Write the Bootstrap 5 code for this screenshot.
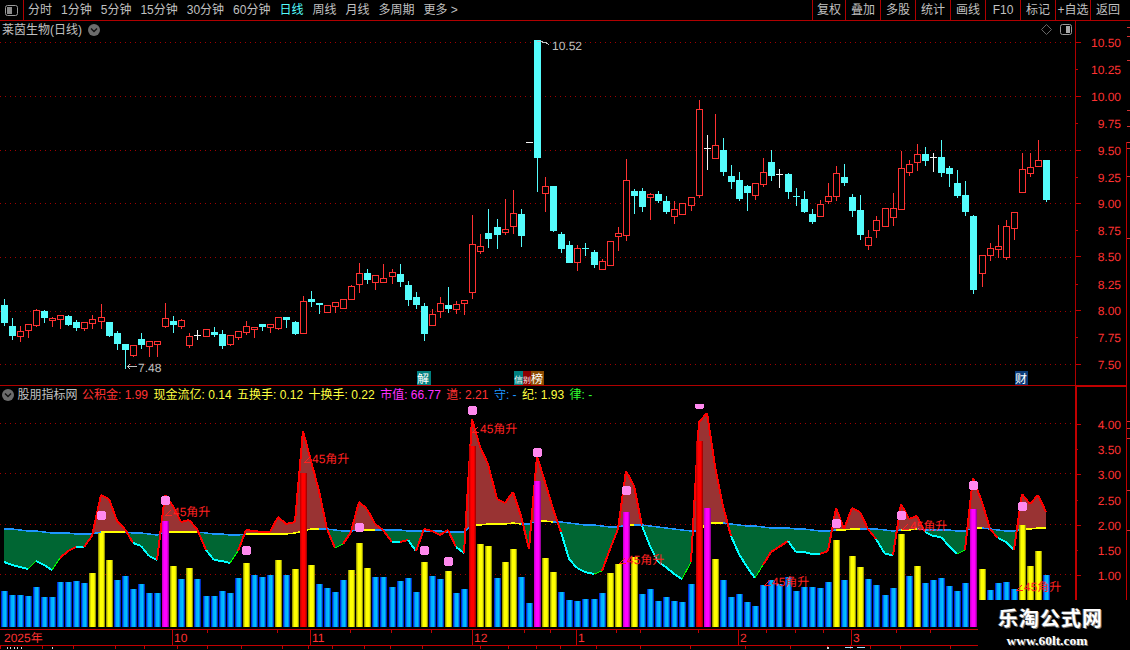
<!DOCTYPE html>
<html lang="zh-CN">
<head>
<meta charset="utf-8">
<title>莱茵生物(日线)</title>
<link rel="stylesheet" href="https://cdn.jsdelivr.net/npm/bootstrap@5.3.0/dist/css/bootstrap.min.css">
<style>
html,body{margin:0;height:650px;overflow:hidden;background:#000;}
body,.tdx-root,svg text{font-family:"Liberation Sans","Noto Sans CJK SC",sans-serif;font-size:12px;color:#c0c0c0;}
.tdx-root{position:relative;width:1130px;height:650px;background:#000;overflow:hidden;}
.tdx-toolbar{height:21px;border-bottom:1px solid #b00000;}
.tb-toggle{width:24px;height:20px;border-right:1px solid #b00000;}
.tb-periods{gap:9px;padding-left:4px;line-height:20px;}
.tb-active{color:#54fcfc;}
.tb-cells{padding-right:5px;}
.tb-cell{width:35px;height:20px;line-height:20px;text-align:center;border-left:1px solid #b00000;white-space:nowrap;}
.tb-cell-first{width:33px;}
.tdx-left{width:1075px;}
.tdx-axis{width:55px;}
.tdx-title{height:17px;padding-left:2px;gap:6px;white-space:nowrap;}
.tdx-subtitle{height:19px;border-top:1px solid #b00000;gap:5.5px;padding-left:2px;white-space:nowrap;}
.tdx-subname{margin-right:-1px;margin-left:-2px;}
.tdx-tools{margin-left:auto;gap:8px;padding-right:3px;}
.c-red{color:#ff3232;}.c-yellow{color:#ffff40;}.c-mag{color:#ff30ff;}.c-blue{color:#1e96ff;}.c-green{color:#30ff30;}
svg{display:block;}
.pane-svg{shape-rendering:crispEdges;}
.pane-svg text{text-rendering:geometricPrecision;}
.watermark{position:absolute;right:0;bottom:0;width:152px;height:50px;background:#000;color:#fff;text-align:center;font-family:"Liberation Serif","Noto Sans CJK SC",serif;font-weight:700;}
.wm-name{font-size:20px;letter-spacing:1px;line-height:26px;padding-top:6px;text-shadow:1px 1px 0 #777,-1px 0 0 #555;color:#fff;padding-right:7px;}
.wm-url{font-size:13.5px;line-height:15px;padding-right:14px;padding-top:1px;text-shadow:1px 1px 0 #666;}
</style>
</head>
<body>
<div class="tdx-root">
  <nav class="tdx-toolbar d-flex align-items-start">
    <div class="tb-toggle d-flex align-items-center justify-content-center">
      <svg width="13" height="11" viewBox="0 0 13 11"><rect x="0.5" y="0.5" width="12" height="10" rx="2" fill="none" stroke="#9a9a9a"/><rect x="2" y="2" width="5" height="7" fill="#8a8a8a"/></svg>
    </div>
    <div class="tb-periods d-flex">
      <span>分时</span><span>1分钟</span><span>5分钟</span><span>15分钟</span><span>30分钟</span><span>60分钟</span><span class="tb-active">日线</span><span class="ps-0">周线</span><span>月线</span><span>多周期</span><span>更多 &gt;</span>
    </div>
    <div class="tb-cells d-flex ms-auto">
      <span class="tb-cell tb-cell-first">复权</span><span class="tb-cell">叠加</span><span class="tb-cell">多股</span><span class="tb-cell">统计</span><span class="tb-cell">画线</span><span class="tb-cell">F10</span><span class="tb-cell">标记</span><span class="tb-cell">+自选</span><span class="tb-cell">返回</span>
    </div>
  </nav>
  <div class="d-flex">
    <div class="tdx-left">
      <div class="tdx-title d-flex align-items-center">
        <span>莱茵生物(日线)</span>
        <svg width="12" height="12" viewBox="0 0 12 12"><circle cx="6" cy="6" r="6" fill="#6c6c6c"/><path d="M3 4.6 6 7.6 9 4.6" fill="none" stroke="#111" stroke-width="1.4"/></svg>
        <div class="tdx-tools d-flex align-items-center">
          <svg width="11" height="11" viewBox="0 0 11 11"><path d="M5.5.5 10.5 5.5 5.5 10.5.5 5.5Z" fill="none" stroke="#666"/></svg>
          <svg width="12" height="11" viewBox="0 0 12 11"><rect x="0.5" y="0.5" width="11" height="10" rx="2" fill="none" stroke="#9a9a9a"/><rect x="6" y="2" width="4" height="7" fill="#a8a8a8"/></svg>
        </div>
      </div>
      <svg id="mainPane" class="pane-svg" width="1075" height="347" viewBox="0 38 1075 347"></svg>
      <div class="tdx-subtitle d-flex align-items-center">
        <svg width="12" height="12" viewBox="0 0 12 12"><circle cx="6" cy="6" r="6" fill="#6c6c6c"/><path d="M3 4.6 6 7.6 9 4.6" fill="none" stroke="#111" stroke-width="1.4"/></svg>
        <span class="tdx-subname">股朋指标网</span>
        <span class="c-red">公积金: 1.99</span>
        <span class="c-yellow">现金流亿: 0.14</span>
        <span class="c-yellow">五换手: 0.12</span>
        <span class="c-yellow">十换手: 0.22</span>
        <span class="c-mag">市值: 66.77</span>
        <span class="c-red">遒: 2.21</span>
        <span class="c-blue">守: -</span>
        <span class="c-yellow">纪: 1.93</span>
        <span class="c-green">律: -</span>
      </div>
      <svg id="subPane" class="pane-svg" width="1075" height="225" viewBox="0 405 1075 225"></svg>
      <svg id="datePane" class="pane-svg" width="1075" height="20" viewBox="0 630 1075 20"></svg>
    </div>
    <div class="tdx-axis">
      <svg id="axisPane" class="pane-svg" width="55" height="629" viewBox="1075 21 55 629"></svg>
    </div>
  </div>
  <div class="watermark">
    <div class="wm-name">乐淘公式网</div>
    <div class="wm-url">www.60lt.com</div>
  </div>
</div>
<script src="https://cdn.jsdelivr.net/npm/bootstrap@5.3.0/dist/js/bootstrap.bundle.min.js"></script>
<script>
const RED='#ff3232',CY='#54fcfc',WH='#f4f4f4',DOT='#a00000';
const gaps=[12,25,36,48,61,73,85,97,109,121];
const cx=i=>4+8*i+gaps.filter(g=>g<=i).length;
const K=`c 299 305 322 325|c 318 326 335 339|r 326 331 336 341|r 324 324 330 337|r 309 310 325 326|c 310 311 317 322|r 317 318 320 326|r 315 315 319 328|c 315 316 324 325|c 320 322 327 330|r 322 322 328 330|r 315 319 323 328|r 304 317 321 328|c 322 322 335 336|c 331 333 343 349|c 344 344 349 368|r 345 345 355 356|c 333 339 344 348|r 341 341 346 356|r 341 341 344 356|r 303 318 326 327|c 316 321 324 332|r 319 320 326 328|r 333 336 345 347|w 330 335 335 339|r 329 329 336 336|c 327 332 334 336|c 330 334 345 348|r 335 335 344 345|r 331 331 337 339|r 321 326 332 334|r 327 327 329 337|c 324 324 326 330|r 324 324 327 332|r 317 317 328 329|c 317 317 319 327|c 321 322 333 334|r 296 301 333 333|c 291 299 301 306|c 303 303 304 313|r 305 305 312 312|r 302 302 306 312|r 299 299 308 308|r 285 286 299 299|r 263 273 284 292|c 269 273 279 283|r 275 275 282 289|r 264 278 282 282|r 269 272 276 283|c 264 274 281 286|c 281 285 299 305|c 292 297 304 308|c 303 306 333 340|r 309 314 325 325|r 297 303 311 317|c 287 305 308 312|r 301 304 309 313|r 300 300 303 314|r 215 244 292 298|r 234 246 251 253|c 209 233 238 247|c 219 227 234 248|r 199 229 232 234|r 190 213 226 233|c 209 214 235 246|w 142 142 142 142|c 40 40 157 191|r 177 186 193 211|c 186 186 230 231|c 232 234 248 252|c 241 245 262 262|r 245 248 262 270|c 243 248 248 255|c 250 252 264 267|r 259 261 269 269|r 241 241 265 265|r 227 233 236 250|r 159 180 235 240|c 189 191 195 213|c 188 191 206 211|r 193 194 197 219|c 191 194 200 202|c 196 201 211 213|r 201 209 216 223|r 203 203 214 214|r 197 197 205 210|r 100 109 195 197|w 135 148 148 169|r 114 145 158 158|c 138 150 171 175|c 165 176 181 188|c 172 180 198 200|c 185 186 192 210|r 183 183 195 199|r 158 172 184 186|c 150 162 175 180|w 169 174 174 187|c 173 174 191 198|c 188 196 196 205|c 191 199 211 212|c 209 214 221 223|r 200 204 216 216|r 183 196 201 203|r 166 173 196 200|c 164 177 182 185|c 194 197 210 216|c 195 210 234 239|r 230 237 245 249|r 216 220 230 237|r 208 208 226 226|r 193 208 217 225|r 151 168 209 209|r 160 164 172 175|r 144 154 162 170|c 147 154 160 165|w 153 157 157 171|c 140 157 172 176|c 166 168 173 186|c 170 183 195 197|c 181 195 211 215|c 215 216 289 293|r 255 255 273 286|r 243 248 255 260|r 225 246 249 257|r 220 226 257 259|r 212 212 228 239|r 153 169 192 192|r 153 167 173 176|r 140 160 166 166|c 160 160 199 201`.split('|').map(s=>s.split(' '));
const tops=[592,596,596,597,588,598,598,583,583,582,584,574,534,561,581,577,590,585,594,594,522,567,580,569,580,597,597,592,594,579,564,576,578,576,561,576,570,474,566,585,589,593,581,571,544,569,578,578,588,582,579,593,563,577,580,572,594,590,447,545,547,579,563,550,578,604,482,559,573,593,601,602,600,600,594,574,565,513,558,595,590,602,598,602,603,585,442,509,560,581,598,595,603,607,586,581,585,578,592,588,588,589,583,541,581,557,568,580,586,596,589,535,577,567,584,581,579,587,592,584,510,570,591,584,583,590,526,567,552,576];
const yel=[11,12,13,21,23,30,34,36,38,43,44,45,52,55,59,60,62,63,67,68,75,76,78,88,103,105,106,111,113,121,126,127,128],mag=[20,66,77,87,120],rd=[37,58,86];
const C=[563,566,568,570,562,566,571,559,552,548,548,537,496,500,522,530,544,547,557,561,496,507,523,521,530,551,561,562,564,552,531,532,533,533,518,525,523,432,462,492,530,549,545,533,503,510,525,531,543,543,541,552,530,532,536,531,548,554,420,448,465,500,504,493,517,550,457,483,510,533,560,569,573,575,572,550,530,472,487,527,547,563,568,575,580,563,423,414,467,507,537,555,568,579,566,553,548,542,553,553,555,555,552,509,530,509,513,530,540,555,556,505,520,517,533,537,538,547,555,551,479,503,530,539,543,551,495,505,496,513];
const L=[530,530,531,532,532,533,534,534,534,535,535,535,533,533,533,533,534,534,535,536,533,533,533,533,533,534,535,535,536,536,535,535,535,535,535,535,534,532,530,530,530,531,532,532,531,531,531,531,531,531,532,532,532,532,532,533,533,533,526,526,525,525,525,524,525,525,522,522,523,523,524,525,526,526,527,528,528,526,526,526,527,528,529,530,531,532,532,524,524,524,525,526,527,527,528,529,529,529,530,530,531,532,532,531,531,530,530,530,530,531,532,531,531,530,531,531,531,531,532,532,529,529,530,531,532,532,530,530,529,529];

let m='';
[42.5,96.5,150.5,203.5,257.5,311.5,364.5].forEach(y=>m+=`<line x1="0" x2="1075" y1="${y}" y2="${y}" stroke="${DOT}" stroke-dasharray="1 4"/>`);
K.forEach((k,i)=>{
  const x=cx(i),[t,hi,tp,bt,lo]=[k[0],+k[1],+k[2],+k[3],+k[4]];
  const col=t=='r'?RED:t=='c'?CY:WH;
  if(hi<lo) m+=`<rect x="${x}" y="${hi}" width="1" height="${lo-hi+1}" fill="${col}"/>`;
  if(tp==bt) m+=`<rect x="${x-3}" y="${tp}" width="7" height="1" fill="${col}"/>`;
  else if(t=='r') m+=`<rect x="${x-2.5}" y="${tp+.5}" width="6" height="${bt-tp}" fill="#000" stroke="${RED}"/>`;
  else m+=`<rect x="${x-3}" y="${tp}" width="7" height="${bt-tp+1}" fill="${col}"/>`;
});
m+=`<path d="M127 366.5H137M127 366.5l3-2M127 366.5l3 2" stroke="#c0c0c0" fill="none"/><text x="138" y="372" fill="#c0c0c0">7.48</text>`;
m+=`<path d="M537 41.5h5l1 1h3l2 1.5h1" stroke="#c0c0c0" fill="none"/><text x="552" y="50" fill="#c0c0c0">10.52</text>`;
[[417,14,'#008080','解',417,12],[514,9,'#008080','信',514,9],[523,8,'#8b0000','别',523,8],[531,13,'#8b4a00','榜',531,12],[1015,13,'#0a3a78','财',1015,12]].forEach(a=>{
  m+=`<rect x="${a[0]}" y="371" width="${a[1]}" height="14" fill="${a[2]}"/><text x="${a[4]}" y="383" fill="#fff" style="font-size:${a[5]}px">${a[3]}</text>`;
});
document.getElementById('mainPane').innerHTML=m;

let s=`<defs>
<linearGradient id="gb"><stop offset="0" stop-color="#0000c8"/><stop offset=".3" stop-color="#00a8ff"/><stop offset=".7" stop-color="#00c4ff"/><stop offset="1" stop-color="#0000b0"/></linearGradient>
<linearGradient id="gy"><stop offset="0" stop-color="#808000"/><stop offset=".3" stop-color="#ffff00"/><stop offset=".75" stop-color="#ffff00"/><stop offset="1" stop-color="#707000"/></linearGradient>
<linearGradient id="gm"><stop offset="0" stop-color="#c000c0"/><stop offset=".3" stop-color="#ff00ff"/><stop offset=".7" stop-color="#ff00ff"/><stop offset="1" stop-color="#800080"/></linearGradient>
<linearGradient id="gr"><stop offset="0" stop-color="#b00000"/><stop offset=".3" stop-color="#ff0000"/><stop offset=".7" stop-color="#ff0000"/><stop offset="1" stop-color="#900000"/></linearGradient>
</defs>`;
[424.5,474.5,525.5,575.5].forEach(y=>s+=`<line x1="0" x2="1075" y1="${y}" y2="${y}" stroke="${DOT}" stroke-dasharray="1 4"/>`);
const poly=(p,f)=>`<polygon points="${p.map(q=>q.join(',')).join(' ')}" fill="${f}"/>`;
const AR='#993333',AG='#006633';
for(let i=0;i<129;i++){
  const x0=cx(i),x1=cx(i+1),d0=C[i]-L[i],d1=C[i+1]-L[i+1];
  if(d0*d1>=0){
    s+=poly([[x0,C[i]],[x1,C[i+1]],[x1,L[i+1]],[x0,L[i]]],(d0+d1)<0?AR:AG);
  }else{
    const t=d0/(d0-d1),xm=x0+(x1-x0)*t,ym=L[i]+(L[i+1]-L[i])*t;
    s+=poly([[x0,C[i]],[xm,ym],[x0,L[i]]],d0<0?AR:AG)+poly([[xm,ym],[x1,C[i+1]],[x1,L[i+1]]],d1<0?AR:AG);
  }
}
for(let i=0;i<129;i++){
  const x0=cx(i),x1=cx(i+1);
  const above=C[i]<L[i]&&C[i+1]<L[i+1];
  s+=`<line x1="${x0}" x2="${x1}" y1="${L[i]}" y2="${L[i+1]}" stroke="${above?'#ffff00':'#1e96ff'}" stroke-width="1.5"/>`;
  const up=C[i+1]<C[i],prevDown=i>0&&C[i]>C[i-1],below=C[i]>L[i]&&C[i+1]>L[i+1];
  let col='#ff0000',w=2;
  if(below&&!up){col='#00ffff';}
  else if(below&&up&&prevDown){col='#00ff00';w=1;}
  s+=`<line x1="${x0}" x2="${x1}" y1="${C[i]}" y2="${C[i+1]}" stroke="${col}" stroke-width="${w}"/>`;
}
tops.forEach((t,i)=>{
  const g=yel.includes(i)?'gy':mag.includes(i)?'gm':rd.includes(i)?'gr':'gb';
  s+=`<rect x="${cx(i)-3}" y="${t}" width="7" height="${627-t+1}" fill="url(#${g})"/>`;
});
[[101,516],[165,501],[246,551],[359,528],[472,411],[424,551],[448,562],[537,453],[626,491],[699,405],[836,524],[901,516],[973,486],[1022,507]].forEach(p=>{
  s+=`<rect x="${p[0]-4}" y="${p[1]-3}" width="9" height="7" fill="#ff88ee"/><rect x="${p[0]-3}" y="${p[1]-4}" width="7" height="9" fill="#ff88ee"/>`;
});
[[166,517],[305,464],[473,434],[620,565],[765,587],[903,531],[1017,592]].forEach(p=>{
  s+=`<path d="M${p[0]+5} ${p[1]-6}L${p[0]} ${p[1]-1}H${p[0]+6}" fill="none" stroke="#ff2020"/><text x="${p[0]+7}" y="${p[1]}" fill="#ff2020">45角升</text>`;
});
document.getElementById('subPane').innerHTML=s;

const DC='#c00000';
let d=`<rect x="0" y="630" width="1075" height="1" fill="${DC}"/><rect x="0" y="646" width="1075" height="1" fill="${DC}"/>`;
[[172,'10'],[310,'11'],[472,'12'],[576,'1'],[738,'2'],[851,'3']].forEach(a=>{
  d+=`<rect x="${a[0]}" y="631" width="1" height="15" fill="${DC}"/><text x="${a[0]+2}" y="643" fill="${RED}">${a[1]}</text>`;
});
d+=`<text x="4" y="643" fill="${RED}">2025年</text>`;
[207,277,350,391,431,524,550,616,640,698,766,795,823,896,930].forEach(x=>d+=`<rect x="${x}" y="631" width="1" height="3" fill="${DC}"/>`);
[0,42,73,115,144,177,207,241,282,308,332,364,390,422,480,508,536,560,596,640,690,745,790,827,850,870,900,950].forEach(x=>d+=`<rect x="${x}" y="647" width="1" height="3" fill="${DC}"/>`);
[7,10,14,17,21,52].forEach(x=>d+=`<rect x="${x}" y="648" width="1" height="2" fill="#d8d8d8"/>`);
d+=`<rect x="827" y="648" width="2" height="2" fill="#d8d8d8"/><rect x="845" y="648" width="8" height="1" fill="#9fe0ff"/><rect x="857" y="648" width="8" height="1" fill="#9fe0ff"/>`;
document.getElementById('datePane').innerHTML=d;

let a=`<rect x="1075" y="21" width="1" height="364" fill="#b00000"/><rect x="1075" y="385" width="2" height="265" fill="#c00000"/><rect x="1076" y="385" width="50" height="2" fill="#c00000"/><rect x="1126" y="142" width="1" height="508" fill="#c00000"/>`;
[[43,'10.50',1],[70,'10.25',0],[97,'10.00',1],[124,'9.75',0],[151,'9.50',1],[178,'9.25',0],[204,'9.00',1],[231,'8.75',0],[257,'8.50',1],[285,'8.25',0],[311,'8.00',1],[338,'7.75',0],[365,'7.50',1],[425,'4.00',1],[450,'3.50',0],[475,'3.00',1],[501,'2.50',0],[526,'2.00',1],[551,'1.50',0],[576,'1.00',1]].forEach(r=>{
  a+=`<rect x="1076" y="${r[0]-1}" width="${r[2]?5:2}" height="1" fill="#c00000"/><text x="1121" y="${r[0]+4}" text-anchor="end" fill="${RED}">${r[1]}</text>`;
});
[27,36,60,110,126,142,148,176,238,421,428,438,490,530,600].forEach(y=>a+=`<rect x="1127" y="${y}" width="3" height="1" fill="#d03030"/>`);
document.getElementById('axisPane').innerHTML=a;
</script>
</body>
</html>
